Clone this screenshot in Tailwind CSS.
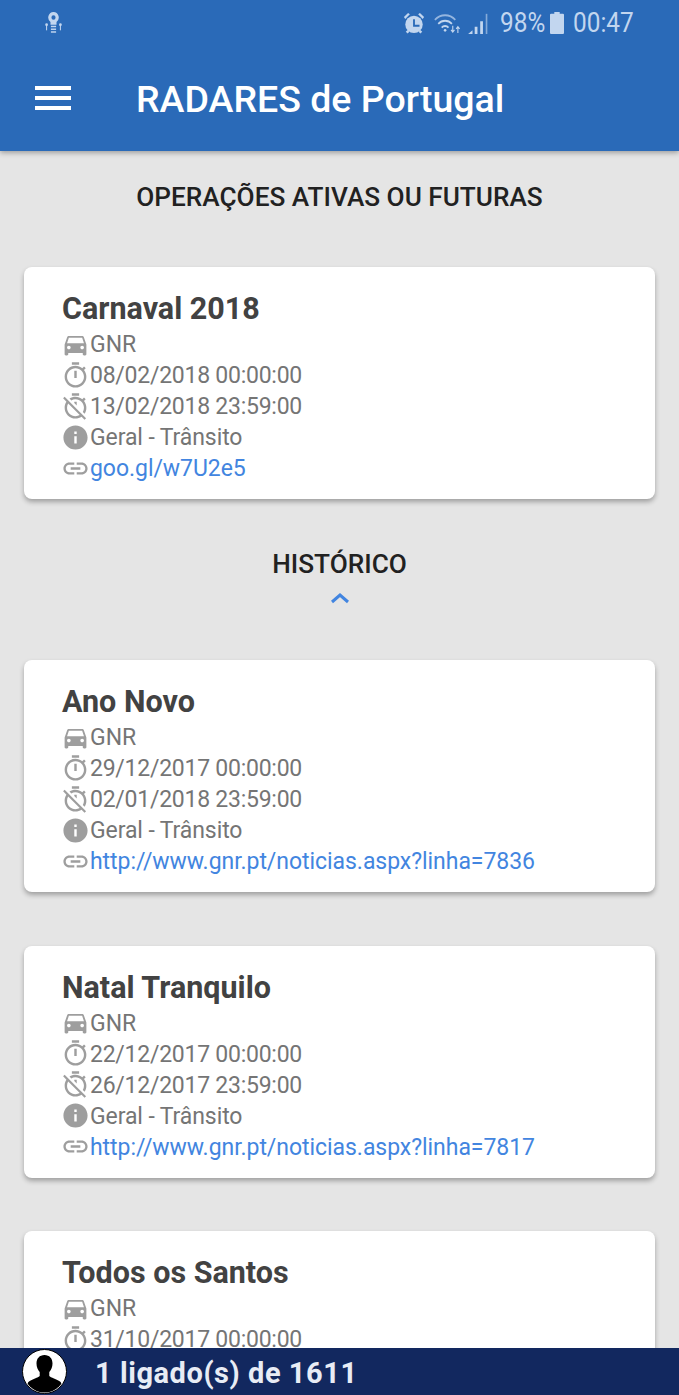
<!DOCTYPE html>
<html lang="en">
<head>
    <meta charset="UTF-8">
    <meta name="viewport" content="width=device-width, initial-scale=1.0">
    <title>RADARES de Portugal</title>
    <script src="https://cdn.jsdelivr.net/npm/@tailwindcss/browser@4"></script>
</head>
<body class="relative h-[1395px] overflow-hidden bg-[#e5e5e5] font-['Roboto',sans-serif]">
    <!-- Icons -->
    <svg class="hidden">
        <symbol id="car" viewBox="0 0 24 24"><path d="M18.92 6.01C18.72 5.42 18.16 5 17.5 5h-11c-.66 0-1.21.42-1.42 1.01L3 12v8c0 .55.45 1 1 1h1c.55 0 1-.45 1-1v-1h12v1c0 .55.45 1 1 1h1c.55 0 1-.45 1-1v-8l-2.08-5.99zM6.5 16c-.83 0-1.5-.67-1.5-1.5S5.67 13 6.5 13s1.5.67 1.5 1.5S7.33 16 6.5 16zm11 0c-.83 0-1.5-.67-1.5-1.5s.67-1.5 1.5-1.5 1.5.67 1.5 1.5-.67 1.5-1.5 1.5zM5 11l1.5-4.5h11L19 11H5z"/></symbol>
        <symbol id="timer" viewBox="0 0 24 24"><path d="M15 1H9v2h6V1zm-4 13h2V8h-2v6zm8.03-6.61l1.42-1.42c-.43-.51-.9-.99-1.41-1.41l-1.42 1.42C16.07 4.74 14.12 4 12 4c-4.97 0-9 4.03-9 9s4.02 9 9 9 9-4.03 9-9c0-2.12-.74-4.07-1.97-5.61zM12 20c-3.87 0-7-3.13-7-7s3.13-7 7-7 7 3.13 7 7-3.13 7-7 7z"/></symbol>
        <symbol id="timer-off" viewBox="0 0 24 24"><path d="M19.04 4.55l-1.42 1.42C16.07 4.74 14.12 4 12 4c-1.83 0-3.53.55-4.95 1.48l1.46 1.46C9.53 6.35 10.73 6 12 6c3.87 0 7 3.13 7 7 0 1.27-.35 2.47-.94 3.49l1.45 1.45C20.45 16.53 21 14.83 21 13c0-2.12-.74-4.07-1.97-5.61l1.42-1.42-1.41-1.42zM15 1H9v2h6V1zm-4 8.18l2 2V8h-2v1.18zM3.02 4L1.75 5.27 4.5 8.03C3.55 9.45 3 11.16 3 13c0 4.97 4.03 9 9 9 1.84 0 3.55-.55 4.98-1.5l2.5 2.5 1.27-1.27-7.71-7.71L3.02 4zM12 20c-3.87 0-7-3.13-7-7 0-1.28.35-2.48.95-3.52l9.56 9.56c-1.03.61-2.23.96-3.51.96z"/></symbol>
        <symbol id="info" viewBox="0 0 24 24"><path d="M12 2C6.48 2 2 6.48 2 12s4.48 10 10 10 10-4.48 10-10S17.52 2 12 2zm1 15h-2v-6h2v6zm0-8h-2V7h2v2z"/></symbol>
        <symbol id="link" viewBox="0 0 24 24"><path d="M3.9 12c0-1.71 1.39-3.1 3.1-3.1h4V7H7c-2.76 0-5 2.24-5 5s2.24 5 5 5h4v-1.9H7c-1.71 0-3.1-1.39-3.1-3.1zM8 13h8v-2H8v2zm9-6h-4v1.9h4c1.71 0 3.1 1.39 3.1 3.1s-1.39 3.1-3.1 3.1h-4V17h4c2.76 0 5-2.24 5-5s-2.24-5-5-5z"/></symbol>
    </svg>

    <!-- App bar -->
    <header class="h-[151px] bg-[#2a6ab8] shadow-[0_2px_5px_rgba(0,0,0,0.3)]">
        <div class="flex h-[45px] items-center pl-[44px] pr-[46px] text-[#c2d6ef]">
            <svg class="h-[22px] w-[19px]" viewBox="0 0 22 24" preserveAspectRatio="none" fill="currentColor">
                <path d="M11 0a6 6 0 0 0-3.500 10.900V14h7v-3.100A6 6 0 0 0 11 0zm0 3.600a2.400 2.400 0 1 1 0 4.800 2.400 2.400 0 0 1 0-4.800z"/>
                <rect x="8" y="15" width="6" height="1.600"/><rect x="8" y="18" width="6" height="1.600"/><rect x="8" y="21" width="6" height="1.600"/>
                <circle cx="3" cy="14" r="1.600"/><circle cx="19" cy="14" r="1.600"/>
                <rect x="2.400" y="15" width="1.200" height="5"/><rect x="18.400" y="15" width="1.200" height="5"/>
            </svg>
            <div class="ml-auto flex items-center">
                <svg class="h-[22px] w-[22px]" viewBox="0 0 24 24" fill="currentColor">
                    <path d="M12 4a9.500 9.500 0 1 0 0 19 9.500 9.500 0 0 0 0-19z"/>
                    <path d="M1 5.500L5.500 1 7.500 2.500 2.500 7.500zM23 5.500L18.500 1 16.500 2.500 21.500 7.500zM3 21.500l2 2 2-2-2-2zM21 21.500l-2 2-2-2 2-2z"/>
                    <path d="M11 8h2v6h5v2h-7z" fill="#2a6ab8"/>
                </svg>
                <svg class="ml-[9px] h-[22px] w-[29px]" viewBox="0 0 34 24" preserveAspectRatio="none" fill="none" stroke="currentColor">
                    <path d="M1 8.500a17 17 0 0 1 24 0" stroke-width="2" opacity="0.7"/>
                    <path d="M5 13a11 11 0 0 1 16 0" stroke-width="2"/>
                    <path d="M9 17a5.500 5.500 0 0 1 8 0" stroke-width="2"/>
                    <circle cx="13" cy="20" r="1.500" fill="currentColor" stroke="none"/>
                    <path d="M22 15v7m-2-2.500l2 2.500 2-2.500M28 23v-7m-2 2.500l2-2.500 2 2.500" stroke-width="1.300"/>
                </svg>
                <svg class="ml-[4px] h-[22px] w-[22px]" viewBox="0 0 20 24" preserveAspectRatio="none" fill="currentColor">
                    <path d="M1 24l4-4v4zM7 24v-8h2.500v8zM12 24v-14h2.500v14z"/><path d="M17 24V2h1.500v22z" opacity="0.6"/>
                </svg>
                <span class="ml-[11px] w-[43px] origin-left scale-x-[0.87] text-[28px] leading-none whitespace-nowrap">98%</span>
                <svg class="ml-[7px] h-[22px] w-[14px]" viewBox="0 0 13 24" preserveAspectRatio="none" fill="currentColor">
                    <path d="M4 0h5v2h3a1 1 0 0 1 1 1v20a1 1 0 0 1-1 1H1a1 1 0 0 1-1-1V3a1 1 0 0 1 1-1h3z"/>
                </svg>
                <span class="ml-[9px] w-[60px] origin-left scale-x-[0.87] text-[28px] leading-none whitespace-nowrap">00:47</span>
            </div>
        </div>
        <div class="flex h-[106px] items-center">
            <div class="ml-[35px] flex w-[36px] flex-col gap-[6px]">
                <span class="h-[4px] bg-white"></span>
                <span class="h-[4px] bg-white"></span>
                <span class="h-[4px] bg-white"></span>
            </div>
            <h1 class="ml-[65px] pt-[3px] text-[37.5px] leading-none font-medium text-white">RADARES de Portugal</h1>
        </div>
    </header>

    <main class="px-[24px]">
        <h2 class="mt-[29px] h-[34px] text-center text-[26.2px] leading-[34px] font-medium text-[#212121]">OPERAÇÕES ATIVAS OU FUTURAS</h2>

        <section class="mt-[53px] flex h-[232px] flex-col rounded-[8px] bg-white pt-[21px] pl-[38px] shadow-[0_3px_5px_rgba(0,0,0,0.3)]">
            <h3 class="h-[42px] text-[30.5px] leading-[41px] font-bold text-[#424242]">Carnaval 2018</h3>
            <div class="flex h-[31px] items-center text-[23px] text-[#757575]"><svg class="-mt-[3px] -ml-[1px] h-[29px] w-[29px] shrink-0 fill-[#9e9e9e]"><use href="#car"/></svg><span>GNR</span></div>
            <div class="flex h-[31px] items-center text-[23px] tracking-[-0.25px] text-[#757575]"><svg class="-mt-[3px] -ml-[1px] h-[29px] w-[29px] shrink-0 fill-[#9e9e9e]"><use href="#timer"/></svg><span>08/02/2018 00:00:00</span></div>
            <div class="flex h-[31px] items-center text-[23px] tracking-[-0.25px] text-[#757575]"><svg class="-mt-[3px] -ml-[1px] h-[29px] w-[29px] shrink-0 fill-[#9e9e9e]"><use href="#timer-off"/></svg><span>13/02/2018 23:59:00</span></div>
            <div class="flex h-[31px] items-center text-[23px] tracking-[-0.1px] text-[#757575]"><svg class="-mt-[3px] -ml-[1px] h-[29px] w-[29px] shrink-0 fill-[#9e9e9e]"><use href="#info"/></svg><span>Geral - Trânsito</span></div>
            <div class="flex h-[31px] items-center text-[23px] tracking-[-0.05px] text-[#4285e0]"><svg class="-mt-[3px] -ml-[1px] h-[29px] w-[29px] shrink-0 fill-[#9e9e9e]"><use href="#link"/></svg><span>goo.gl/w7U2e5</span></div>
        </section>

        <h2 class="mt-[48px] h-[34px] text-center text-[26.2px] leading-[34px] font-medium text-[#212121]">HISTÓRICO</h2>
        <svg class="mx-auto mt-[10px] h-[14px] w-[20px]" viewBox="0 0 20 14" fill="none" stroke="#4285e0" stroke-width="3"><path d="M2 11l8-7 8 7"/></svg>

        <div class="mt-[55px] flex flex-col gap-[53.5px]">
            <section class="flex h-[232px] flex-col rounded-[8px] bg-white pt-[21px] pl-[38px] shadow-[0_3px_5px_rgba(0,0,0,0.3)]">
                <h3 class="h-[42px] text-[30.5px] leading-[41px] font-bold text-[#424242]">Ano Novo</h3>
                <div class="flex h-[31px] items-center text-[23px] text-[#757575]"><svg class="-mt-[3px] -ml-[1px] h-[29px] w-[29px] shrink-0 fill-[#9e9e9e]"><use href="#car"/></svg><span>GNR</span></div>
                <div class="flex h-[31px] items-center text-[23px] tracking-[-0.25px] text-[#757575]"><svg class="-mt-[3px] -ml-[1px] h-[29px] w-[29px] shrink-0 fill-[#9e9e9e]"><use href="#timer"/></svg><span>29/12/2017 00:00:00</span></div>
                <div class="flex h-[31px] items-center text-[23px] tracking-[-0.25px] text-[#757575]"><svg class="-mt-[3px] -ml-[1px] h-[29px] w-[29px] shrink-0 fill-[#9e9e9e]"><use href="#timer-off"/></svg><span>02/01/2018 23:59:00</span></div>
                <div class="flex h-[31px] items-center text-[23px] tracking-[-0.1px] text-[#757575]"><svg class="-mt-[3px] -ml-[1px] h-[29px] w-[29px] shrink-0 fill-[#9e9e9e]"><use href="#info"/></svg><span>Geral - Trânsito</span></div>
                <div class="flex h-[31px] items-center text-[23px] tracking-[-0.05px] text-[#4285e0]"><svg class="-mt-[3px] -ml-[1px] h-[29px] w-[29px] shrink-0 fill-[#9e9e9e]"><use href="#link"/></svg><span>http://www.gnr.pt/noticias.aspx?linha=7836</span></div>
            </section>

            <section class="flex h-[232px] flex-col rounded-[8px] bg-white pt-[21px] pl-[38px] shadow-[0_3px_5px_rgba(0,0,0,0.3)]">
                <h3 class="h-[42px] text-[30.5px] leading-[41px] font-bold text-[#424242]">Natal Tranquilo</h3>
                <div class="flex h-[31px] items-center text-[23px] text-[#757575]"><svg class="-mt-[3px] -ml-[1px] h-[29px] w-[29px] shrink-0 fill-[#9e9e9e]"><use href="#car"/></svg><span>GNR</span></div>
                <div class="flex h-[31px] items-center text-[23px] tracking-[-0.25px] text-[#757575]"><svg class="-mt-[3px] -ml-[1px] h-[29px] w-[29px] shrink-0 fill-[#9e9e9e]"><use href="#timer"/></svg><span>22/12/2017 00:00:00</span></div>
                <div class="flex h-[31px] items-center text-[23px] tracking-[-0.25px] text-[#757575]"><svg class="-mt-[3px] -ml-[1px] h-[29px] w-[29px] shrink-0 fill-[#9e9e9e]"><use href="#timer-off"/></svg><span>26/12/2017 23:59:00</span></div>
                <div class="flex h-[31px] items-center text-[23px] tracking-[-0.1px] text-[#757575]"><svg class="-mt-[3px] -ml-[1px] h-[29px] w-[29px] shrink-0 fill-[#9e9e9e]"><use href="#info"/></svg><span>Geral - Trânsito</span></div>
                <div class="flex h-[31px] items-center text-[23px] tracking-[-0.05px] text-[#4285e0]"><svg class="-mt-[3px] -ml-[1px] h-[29px] w-[29px] shrink-0 fill-[#9e9e9e]"><use href="#link"/></svg><span>http://www.gnr.pt/noticias.aspx?linha=7817</span></div>
            </section>

            <section class="flex h-[232px] flex-col rounded-[8px] bg-white pt-[21px] pl-[38px] shadow-[0_3px_5px_rgba(0,0,0,0.3)]">
                <h3 class="h-[42px] text-[30.5px] leading-[41px] font-bold text-[#424242]">Todos os Santos</h3>
                <div class="flex h-[31px] items-center text-[23px] text-[#757575]"><svg class="-mt-[3px] -ml-[1px] h-[29px] w-[29px] shrink-0 fill-[#9e9e9e]"><use href="#car"/></svg><span>GNR</span></div>
                <div class="flex h-[31px] items-center text-[23px] tracking-[-0.25px] text-[#757575]"><svg class="-mt-[3px] -ml-[1px] h-[29px] w-[29px] shrink-0 fill-[#9e9e9e]"><use href="#timer"/></svg><span>31/10/2017 00:00:00</span></div>
            </section>
        </div>
    </main>

    <!-- Footer bar lies over the list -->
    <footer class="absolute inset-x-0 bottom-0 flex h-[47px] items-center bg-[#12285f]">
        <svg class="ml-[22px] h-[45px] w-[45px]" viewBox="0 0 45 45">
            <defs><clipPath id="avatarClip"><circle cx="22.500" cy="22.500" r="21"/></clipPath></defs>
            <circle cx="22.500" cy="22.500" r="22" fill="#fff" stroke="#000" stroke-width="1"/>
            <g clip-path="url(#avatarClip)">
                <path d="M22.500 6c-5 0-8 3.500-8 8.500 0 3.500 1.300 6.500 3.200 8.500v4c-1 1.500-8 3.500-10.700 5.500C4.500 34.500 4 40 4 45h37c0-5-.5-10.500-3-12.500-2.700-2-9.700-4-10.700-5.500v-4c1.900-2 3.200-5 3.200-8.500 0-5-3-8.500-8-8.500z" fill="#000"/>
            </g>
        </svg>
        <span class="ml-[28px] pt-[3px] text-[29px] leading-none font-bold tracking-[0.55px] text-[#e8ecf5]">1 ligado(s) de 1611</span>
    </footer>
</body>
</html>
